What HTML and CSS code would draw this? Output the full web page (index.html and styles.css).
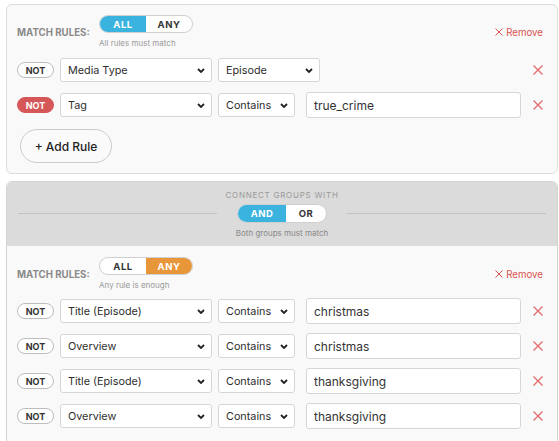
FILE: index.html
```html
<!DOCTYPE html>
<html>
<head>
<meta charset="utf-8">
<link rel="stylesheet" href="styles.css">
</head>
<body>
<div class="page">
  <div class="group">
    <div class="head">
      <div class="label">MATCH RULES:</div>
      <div class="mode">
        <div class="toggle"><span class="seg on-blue">ALL</span><span class="seg">ANY</span></div>
        <div class="sub">All rules must match</div>
      </div>
      <div class="remove"><svg width="8" height="8" viewBox="0 0 8 8"><path d="M0.5 0.5L7.5 7.5M7.5 0.5L0.5 7.5" stroke="#d9534f" stroke-width="1"/></svg>Remove</div>
    </div>
    <div class="rows">
      <div class="row">
        <div class="not">NOT</div>
        <div class="select field">Media Type<svg width="8" height="5" viewBox="0 0 8 5"><path d="M1 1l3 3 3-3" fill="none" stroke="#222" stroke-width="1.8"/></svg></div>
        <div class="select val">Episode<svg width="8" height="5" viewBox="0 0 8 5"><path d="M1 1l3 3 3-3" fill="none" stroke="#222" stroke-width="1.8"/></svg></div>
        <svg class="del" width="10" height="10" viewBox="0 0 10 10"><path d="M0.5 0.5L9.5 9.5M9.5 0.5L0.5 9.5" stroke="#e06b6b" stroke-width="1.3"/></svg>
      </div>
      <div class="row">
        <div class="not on">NOT</div>
        <div class="select field">Tag<svg width="8" height="5" viewBox="0 0 8 5"><path d="M1 1l3 3 3-3" fill="none" stroke="#222" stroke-width="1.8"/></svg></div>
        <div class="select op">Contains<svg width="8" height="5" viewBox="0 0 8 5"><path d="M1 1l3 3 3-3" fill="none" stroke="#222" stroke-width="1.8"/></svg></div>
        <input class="input" type="text" value="true_crime">
        <svg class="del" width="10" height="10" viewBox="0 0 10 10"><path d="M0.5 0.5L9.5 9.5M9.5 0.5L0.5 9.5" stroke="#e06b6b" stroke-width="1.3"/></svg>
      </div>
    </div>
    <button class="add">+ Add Rule</button>
  </div>

  <div class="wrap">
    <div class="conn">
      <div class="conn-title">CONNECT GROUPS WITH</div>
      <div class="conn-mid">
        <div class="line"></div>
        <div class="toggle big"><span class="seg and on-blue">AND</span><span class="seg or">OR</span></div>
        <div class="line"></div>
      </div>
      <div class="conn-sub">Both groups must match</div>
    </div>
    <div class="group inner">
      <div class="head">
        <div class="label">MATCH RULES:</div>
        <div class="mode">
          <div class="toggle"><span class="seg">ALL</span><span class="seg on-orange">ANY</span></div>
          <div class="sub">Any rule is enough</div>
        </div>
        <div class="remove"><svg width="8" height="8" viewBox="0 0 8 8"><path d="M0.5 0.5L7.5 7.5M7.5 0.5L0.5 7.5" stroke="#d9534f" stroke-width="1"/></svg>Remove</div>
      </div>
      <div class="rows">
        <div class="row">
          <div class="not">NOT</div>
          <div class="select field">Title (Episode)<svg width="8" height="5" viewBox="0 0 8 5"><path d="M1 1l3 3 3-3" fill="none" stroke="#222" stroke-width="1.8"/></svg></div>
          <div class="select op">Contains<svg width="8" height="5" viewBox="0 0 8 5"><path d="M1 1l3 3 3-3" fill="none" stroke="#222" stroke-width="1.8"/></svg></div>
          <input class="input" type="text" value="christmas">
          <svg class="del" width="10" height="10" viewBox="0 0 10 10"><path d="M0.5 0.5L9.5 9.5M9.5 0.5L0.5 9.5" stroke="#e06b6b" stroke-width="1.3"/></svg>
        </div>
        <div class="row">
          <div class="not">NOT</div>
          <div class="select field">Overview<svg width="8" height="5" viewBox="0 0 8 5"><path d="M1 1l3 3 3-3" fill="none" stroke="#222" stroke-width="1.8"/></svg></div>
          <div class="select op">Contains<svg width="8" height="5" viewBox="0 0 8 5"><path d="M1 1l3 3 3-3" fill="none" stroke="#222" stroke-width="1.8"/></svg></div>
          <input class="input" type="text" value="christmas">
          <svg class="del" width="10" height="10" viewBox="0 0 10 10"><path d="M0.5 0.5L9.5 9.5M9.5 0.5L0.5 9.5" stroke="#e06b6b" stroke-width="1.3"/></svg>
        </div>
        <div class="row">
          <div class="not">NOT</div>
          <div class="select field">Title (Episode)<svg width="8" height="5" viewBox="0 0 8 5"><path d="M1 1l3 3 3-3" fill="none" stroke="#222" stroke-width="1.8"/></svg></div>
          <div class="select op">Contains<svg width="8" height="5" viewBox="0 0 8 5"><path d="M1 1l3 3 3-3" fill="none" stroke="#222" stroke-width="1.8"/></svg></div>
          <input class="input" type="text" value="thanksgiving">
          <svg class="del" width="10" height="10" viewBox="0 0 10 10"><path d="M0.5 0.5L9.5 9.5M9.5 0.5L0.5 9.5" stroke="#e06b6b" stroke-width="1.3"/></svg>
        </div>
        <div class="row">
          <div class="not">NOT</div>
          <div class="select field">Overview<svg width="8" height="5" viewBox="0 0 8 5"><path d="M1 1l3 3 3-3" fill="none" stroke="#222" stroke-width="1.8"/></svg></div>
          <div class="select op">Contains<svg width="8" height="5" viewBox="0 0 8 5"><path d="M1 1l3 3 3-3" fill="none" stroke="#222" stroke-width="1.8"/></svg></div>
          <input class="input" type="text" value="thanksgiving">
          <svg class="del" width="10" height="10" viewBox="0 0 10 10"><path d="M0.5 0.5L9.5 9.5M9.5 0.5L0.5 9.5" stroke="#e06b6b" stroke-width="1.3"/></svg>
        </div>
      </div>
    </div>
  </div>
</div>
</body>
</html>
```
FILE: styles.css
```css
* { box-sizing: border-box; }
body {
  margin: 0;
  background: #fff;
  font-family: Inter, "Noto Sans", "Liberation Sans", sans-serif;
  color: #333;
}
.page {
  padding: 4px 1px 0 6px;
}
.group {
  border: 1px solid #dcdcdc;
  border-radius: 6px;
  background: #f9f9f9;
  padding: 10px 14px 10px 10px;
}
.head {
  display: flex;
  align-items: center;
}
.label {
  width: 82px;
  font-size: 9.7px;
  font-weight: 700;
  color: #8a8a8a;
}
.mode {
  display: flex;
  flex-direction: column;
  align-items: flex-start;
}
.toggle {
  display: flex;
  height: 18px;
  border: 1px solid #cfcfcf;
  border-radius: 10px;
  overflow: hidden;
  background: #fff;
}
.seg {
  width: 46px;
  display: flex;
  align-items: center;
  justify-content: center;
  font-size: 9.5px;
  font-weight: 700;
  letter-spacing: 0.5px;
  color: #333;
}
.on-blue { background: #3ab3df; color: #fff; }
.on-orange { background: #e8963a; color: #fff; }
.sub {
  margin-top: 4px;
  font-size: 8px;
  line-height: 12px;
  color: #9a9a9a;
}
.remove {
  margin-left: auto;
  display: flex;
  align-items: center;
  gap: 3px;
  font-size: 9.7px;
  color: #d9534f;
}
.rows {
  margin-top: 8px;
  display: flex;
  flex-direction: column;
  gap: 9px;
}
.row {
  display: flex;
  align-items: center;
  height: 26px;
}
.not {
  flex: none;
  width: 37px;
  height: 16px;
  margin-right: 6px;
  border: 1px solid #bdbdbd;
  border-radius: 8px;
  background: #fff;
  display: flex;
  align-items: center;
  justify-content: center;
  font-size: 9px;
  font-weight: 700;
  color: #333;
}
.not.on {
  background: #d65757;
  border-color: #d65757;
  color: #fff;
}
.select {
  flex: none;
  height: 24px;
  margin-right: 6px;
  padding: 0 6px 0 7px;
  border: 1px solid #d6d6d6;
  border-radius: 3px;
  background: #fff;
  display: flex;
  align-items: center;
  justify-content: space-between;
  font-size: 10.8px;
  color: #2e2e2e;
}
.field { width: 152px; }
.val { width: 102px; }
.op { width: 77px; margin-right: 11px; }
.input {
  flex: none;
  width: 215px;
  height: 26px;
  padding: 0 7px;
  border: 1px solid #d6d6d6;
  border-radius: 3px;
  background: #fff;
  font-family: Inter, "Noto Sans", sans-serif;
  font-size: 12px;
  color: #333;
  outline: none;
}
.del {
  margin-left: auto;
  flex: none;
}
.add {
  display: block;
  margin: 11px 0 0 3px;
  width: 92px;
  height: 34px;
  border: 1px solid #cccccc;
  border-radius: 17px;
  background: #fafafa;
  font-family: Inter, "Noto Sans", sans-serif;
  font-size: 12px;
  font-weight: 500;
  color: #222;
  padding: 0;
}
.wrap {
  margin-top: 7px;
  border: 1px solid #d3d3d3;
  border-radius: 6px;
  overflow: hidden;
}
.conn {
  background: #dbdbdb;
  padding: 7px 11px;
}
.conn-title {
  text-align: center;
  font-size: 8px;
  line-height: 12px;
  letter-spacing: 0.75px;
  color: #999;
}
.conn-mid {
  margin-top: 3px;
  display: flex;
  align-items: center;
  gap: 20px;
}
.line {
  flex: 1;
  height: 1px;
  background: #c3c3c3;
}
.toggle.big { height: 19px; }
.seg.and { width: 48px; }
.seg.or { width: 40px; }
.conn-sub {
  margin-top: 4px;
  text-align: center;
  font-size: 8px;
  line-height: 12px;
  color: #888;
}
.group.inner {
  border: none;
  border-radius: 0;
  padding: 11px 14px 16px 10px;
}
.inner .rows { margin-top: 7px; }
```
